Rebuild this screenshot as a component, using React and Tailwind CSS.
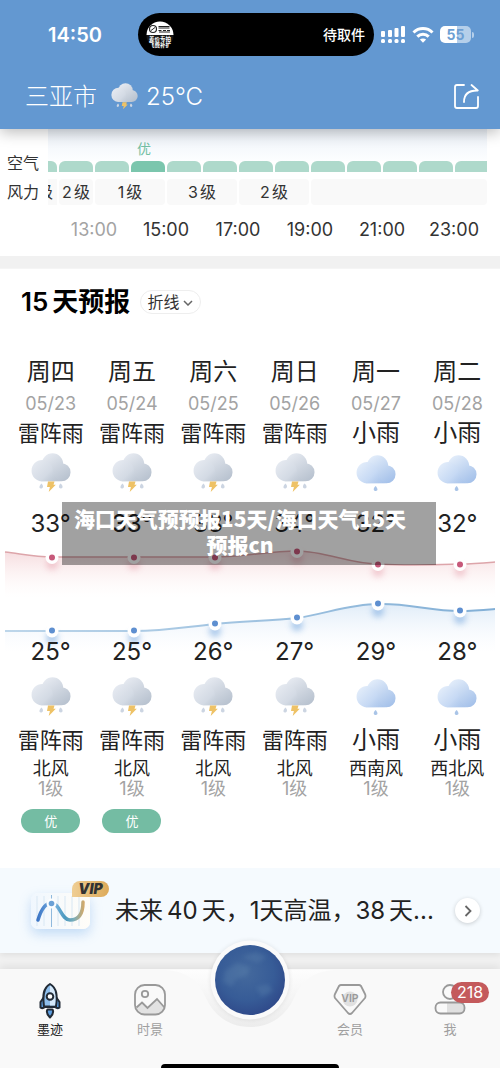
import React, { useId } from 'react';

const days = [
  { name: '周四', date: '05/23', sky: '雷阵雨', high: '33°', low: '25°', wind: '北风', air: '优' },
  { name: '周五', date: '05/24', sky: '雷阵雨', high: '33°', low: '25°', wind: '北风', air: '优' },
  { name: '周六', date: '05/25', sky: '雷阵雨', high: '33°', low: '26°', wind: '北风' },
  { name: '周日', date: '05/26', sky: '雷阵雨', high: '34°', low: '27°', wind: '北风' },
  { name: '周一', date: '05/27', sky: '小雨', high: '32°', low: '29°', wind: '西南风' },
  { name: '周二', date: '05/28', sky: '小雨', high: '32°', low: '28°', wind: '西北风' },
];

const hours = ['13:00', '15:00', '17:00', '19:00', '21:00', '23:00'];
const highPoints = [[52, 17], [134, 17], [215, 17], [297, 11], [378, 24], [460, 24]];
const lowPoints = [[52, 91], [134, 91], [215, 84], [297, 78], [378, 64], [460, 71]];

function CloudIcon({ storm, className }) {
  const id = useId();
  const [light, mid, dark] = storm ? ['#e6eaf1', '#d3dae4', '#b9c3d0'] : ['#e3edfa', '#c6d9f4', '#a6c2ea'];
  return (
    <svg viewBox="0 0 40 40" className={className} aria-hidden="true">
      <defs>
        <linearGradient id={id + 'a'} gradientUnits="userSpaceOnUse" x1="14" y1="2" x2="32" y2="28">
          <stop offset="0" stopColor={light} />
          <stop offset="1" stopColor={dark} />
        </linearGradient>
        <linearGradient id={id + 'b'} gradientUnits="userSpaceOnUse" x1="3" y1="9" x2="24" y2="30">
          <stop offset="0" stopColor={light} />
          <stop offset="0.6" stopColor={mid} />
          <stop offset="1" stopColor={dark} stopOpacity="0.300" />
        </linearGradient>
      </defs>
      <g transform={storm ? undefined : 'translate(0 2)'}>
        <path d="M10 28.300V18H22L30.500 10.200A9.050 9.050 0 0 1 30.500 28.300z" fill={`url(#${id}a)`} />
        <circle cx="21.500" cy="11" r="10.700" fill={`url(#${id}a)`} />
        <path d="M11.200 7a10.650 10.650 0 0 1 10.600 9.500c.4 4.500 2.600 8.300 7 11.800H11.200A10.650 10.650 0 0 1 11.200 7z" fill={`url(#${id}b)`} />
      </g>
      {storm ? (
        <>
          <path d="M17 28.500h6.500l-1 3.200h2.300L17.700 39l1.200-5h-2.900z" fill="#eec266" />
          <path d="M10.500 30.500c-2 1.500-3 5-.6 5s3-2.500.6-5zM29.500 30.500c-2.200 2-2 5 .4 5s2.200-3.500-.4-5z" fill="#ccd5e2" />
        </>
      ) : (
        <path d="M19.500 33c-2.500 2.500-2.300 5 .2 5s2.200-3-.2-5z" fill="#a9c4e7" />
      )}
    </svg>
  );
}

function TrendChart() {
  return (
    <svg viewBox="0 0 500 96" className="block h-auto w-full overflow-visible" role="img" aria-label="最高与最低气温折线">
      <defs>
        <linearGradient id="warm" x1="0" y1="0" x2="0" y2="1">
          <stop offset="0" stopColor="#f5dadd" stopOpacity="0.95" />
          <stop offset="1" stopColor="#fff6f5" stopOpacity="0" />
        </linearGradient>
        <linearGradient id="cool" x1="0" y1="0" x2="0" y2="1">
          <stop offset="0" stopColor="#e0ecf8" />
          <stop offset="1" stopColor="#f5f9fe" stopOpacity="0" />
        </linearGradient>
        <linearGradient id="coolLine">
          <stop offset="0" stopColor="#bdd6ea" />
          <stop offset="1" stopColor="#82afd6" />
        </linearGradient>
        <filter id="soft" x="-100%" y="-100%" width="300%" height="300%">
          <feGaussianBlur stdDeviation="3" />
        </filter>
      </defs>
      <path d="M5 12C22 14 35 17 52 17H215C245 17 268 11 297 11C325 11 350 24 378 24C410 26 430 25 460 24C474 24 484 23 495 22V58H5z" fill="url(#warm)" />
      <path d="M5 12C22 14 35 17 52 17H215C245 17 268 11 297 11C325 11 350 24 378 24C410 26 430 25 460 24C474 24 484 23 495 22" fill="none" stroke="#dda5aa" strokeWidth="1.500" />
      <path d="M5 91H134C165 91 185 87 215 84C243 81 270 81 297 78C325 74 350 64 378 64C408 63 430 71 460 71C474 71 484 70 495 69V112H5z" fill="url(#cool)" />
      <path d="M5 91H134C165 91 185 87 215 84C243 81 270 81 297 78C325 74 350 64 378 64C408 63 430 71 460 71C474 71 484 70 495 69" fill="none" stroke="url(#coolLine)" strokeWidth="2" />
      {highPoints.map(([x, y]) => (
        <g key={x}>
          <circle cx={x} cy={y + 7} r="6" fill="#e28b9b" opacity="0.400" filter="url(#soft)" />
          <circle cx={x} cy={y + 0.5} r="6.500" fill="#fff" />
          <circle cx={x} cy={y + 0.5} r="3" fill="#c7597a" />
        </g>
      ))}
      {lowPoints.map(([x, y]) => (
        <g key={x}>
          <circle cx={x} cy={y + 7} r="6" fill="#79a9df" opacity="0.600" filter="url(#soft)" />
          <circle cx={x} cy={y} r="6.500" fill="#fff" />
          <circle cx={x} cy={y - 0.5} r="3" fill="#5e8fd0" />
        </g>
      ))}
    </svg>
  );
}

function Header() {
  return (
    <header className="relative z-10 bg-[#6398d1] pt-[13px] text-white shadow-[0_3px_14px_rgba(0,0,0,0.28)]">
      <div className="flex h-[43px] items-center">
        <div className="w-[138px] pl-12 text-xl font-semibold">14:50</div>
        <div className="flex h-full flex-1 items-center justify-between rounded-full bg-black pr-[9px] pl-2">
          <svg viewBox="0 0 28 28" className="size-7" aria-hidden="true">
            <defs>
              <clipPath id="avatar"><circle cx="14" cy="14" r="13.500" /></clipPath>
            </defs>
            <g clipPath="url(#avatar)">
              <rect width="28" height="28" fill="#151515" />
              <rect width="28" height="14" fill="#fff" />
              <circle cx="7" cy="8" r="3.500" fill="none" stroke="#222" strokeWidth="1.200" />
              <path d="M5 9.500l4-3M12.500 5.500h11M12.500 7h11M12.500 9.500h3M17 9.500h3M21 9.500h3M13 11h11" stroke="#222" strokeWidth="1" fill="none" />
            </g>
            <g fill="#fff" fontSize="5.500" fontWeight="700">
              <text x="3" y="20">差价专拍</text>
              <text x="3" y="26">飞费补扩</text>
            </g>
          </svg>
          <span className="text-sm font-medium">待取件</span>
        </div>
        <div className="flex w-[126px] items-center pl-[7px]">
          <svg viewBox="0 0 24 17" className="h-[17px] w-6" fill="#fff" aria-label="信号">
            <rect x="0" y="5" width="4" height="6" rx="1" /><rect x="7" y="4" width="4" height="7" rx="1" />
            <rect x="13.500" y="2" width="4" height="9" rx="1" /><rect x="20" y="0" width="4" height="11" rx="1" />
            <rect x="0" y="13" width="4" height="4" rx="1.500" /><rect x="7" y="13" width="4" height="4" rx="1.500" />
            <rect x="13.500" y="13" width="4" height="4" rx="1.500" /><rect x="20" y="13" width="4" height="4" rx="1.500" />
          </svg>
          <svg viewBox="0 0 22 16" className="ml-[7px] h-4 w-[22px]" fill="none" stroke="#fff" strokeWidth="3" aria-label="无线网络">
            <path d="M1.500 5.500a13.500 13.500 0 0 1 19 0M5.300 9.600a8 8 0 0 1 11.400 0" />
            <path d="M11 11.500c1.300 0 2.300.4 3.100 1.100L11 15.800l-3.100-3.200c.8-.7 1.800-1.100 3.100-1.100z" fill="#fff" stroke="none" />
          </svg>
          <div className="ml-[6px] flex h-[17px] w-[31px] items-center justify-center rounded-[5px] bg-linear-to-r from-white from-55% to-[#b5cfea] to-55% text-sm font-bold text-[#6e9fd3]">55</div>
          <div className="ml-px h-1.5 w-0.5 rounded-r bg-[#b5cfea]" />
        </div>
      </div>
      <div className="flex h-[73px] items-center pt-2 pr-5 pl-[25px] text-2xl font-light">
        <span>三亚市</span>
        <CloudIcon storm className="ml-[14px] size-[27px]" />
        <span className="ml-2">25°C</span>
        <button className="ml-auto" aria-label="分享">
          <svg viewBox="0 0 27 27" className="size-[27px]" fill="none" stroke="#fff" strokeWidth="1.800">
            <path d="M11 2H4Q2 2 2 4V23Q2 25 4 25H23Q25 25 25 23V14" strokeLinecap="round" />
            <path d="M11 19C11 12 14 7.500 24 7.500M18.500 2L24.800 7.500" strokeLinecap="round" />
          </svg>
        </button>
      </div>
    </header>
  );
}

function HourlyStrip() {
  return (
    <section className="h-[127px] bg-white text-[#333]">
      <div className="flex">
        <div className="w-12 pt-[23px] pl-[7px] text-base leading-[22px]">
          <div>空气</div>
          <div className="mt-[7px]">风力</div>
        </div>
        <div className="mr-[13px] min-w-0 flex-1">
          <div className="grid h-8 grid-cols-[9fr_repeat(11,34fr)_32fr] gap-x-0.5 bg-linear-to-b from-[#edf2f9] to-[#fdfeff]">
            <div className="col-start-4 pt-[9px] pr-2 text-center text-sm leading-[22px] text-[#73bfa3]">优</div>
          </div>
          <div className="grid h-[11px] grid-cols-[9fr_repeat(11,34fr)_32fr] gap-x-0.5">
            {Array.from({ length: 13 }, (_, i) => (
              <div
                key={i}
                className={
                  i === 3 ? 'rounded-t-md bg-[#7bc6ad]' : i === 0 ? 'rounded-tr-md bg-[#aed9cb]' : i === 12 ? 'rounded-tl-md bg-[#aed9cb]' : 'rounded-t-md bg-[#aed9cb]'
                }
              />
            ))}
          </div>
          <div className="mt-[7px] grid h-[26px] grid-cols-[9fr_34fr_70fr_70fr_70fr_176fr] gap-x-0.5 text-base leading-[26px]">
            {['级', '2级', '1级', '3级', '2级', ''].map((label, i) => (
              <div key={i} className={'flex overflow-hidden bg-[#f9f9f9] ' + (i === 0 ? 'justify-end pr-1' : 'justify-center gap-0.5 rounded')}>
                {label.length > 1 ? <><span>{label[0]}</span><span>{label[1]}</span></> : label}
              </div>
            ))}
          </div>
        </div>
      </div>
      <div className="mt-[13px] mr-[10px] ml-[58px] grid grid-cols-6 text-center text-lg leading-6">
        {hours.map((h, i) => (
          <span key={h} className={i === 0 ? 'text-[#a3a3a3]' : ''}>{h}</span>
        ))}
      </div>
    </section>
  );
}

function Forecast() {
  return (
    <section className="relative mt-[13px] bg-white pb-[35px] text-[#222] shadow-[0_-1px_0_#f5f5f5]">
      <div className="flex h-[86px] items-start pt-[15px] pl-[21px]">
        <h2 className="flex items-center gap-1 text-[26px] leading-9 font-semibold text-black">
          <span>15</span><span>天预报</span>
        </h2>
        <div className="relative mt-[6px] ml-[10px]">
          <select aria-label="显示方式" className="block h-6 w-[61px] appearance-none rounded-full border border-[#eeeeee] bg-white pl-[6px] text-base leading-5 text-[#333]">
            <option>折线</option>
            <option>列表</option>
          </select>
          <svg viewBox="0 0 10 6" className="pointer-events-none absolute top-[10px] right-[8px] h-[6px] w-[10px]" fill="none" stroke="#666" strokeWidth="1.500">
            <path d="M1 1l4 4 4-4" />
          </svg>
        </div>
      </div>
      <div className="grid grid-cols-6 pr-[2px] pl-[10px] pt-px">
        {days.map((d) => (
          <div key={d.date} className="flex flex-col items-center whitespace-nowrap">
            <span className="text-2xl">{d.name}</span>
            <span className="mt-[5px] text-lg leading-[22px] text-[#a3a3a3]">{d.date}</span>
            <span className={'mt-[3px] leading-[30px] ' + (d.sky.length > 2 ? 'text-[22px]' : 'text-2xl leading-[30px]')}>{d.sky}</span>
            <CloudIcon storm={d.sky === '雷阵雨'} className="mt-[5px] size-10" />
            <span className="mt-[15px] text-2xl">{d.high}</span>
          </div>
        ))}
      </div>
      <TrendChart />
      <div className="relative grid grid-cols-6 pr-[2px] pl-[10px]">
        {days.map((d) => (
          <div key={d.date} className="flex flex-col items-center whitespace-nowrap">
            <span className="text-2xl">{d.low}</span>
            <CloudIcon storm={d.sky === '雷阵雨'} className="mt-[9px] size-10" />
            <span className={'mt-2 leading-[30px] ' + (d.sky.length > 2 ? 'text-[22px]' : 'text-2xl leading-[30px]')}>{d.sky}</span>
            <span className="mt-[3px] text-lg leading-[22px]">{d.wind}</span>
            <span className="text-lg leading-[18px] text-[#a3a3a3]">1级</span>
            {d.air && (
              <span className="mt-[11px] h-6 w-[59px] rounded-full bg-[#74bca3] text-center text-[13px] leading-6 text-white">{d.air}</span>
            )}
          </div>
        ))}
      </div>
      <div className="absolute top-[233px] right-16 left-[62px] h-[63px] bg-black/37 pt-[3px] pr-[18px] text-center font-['Noto_Sans_CJK_SC',sans-serif] text-[21px] leading-[26px] font-black text-white">
        海口天气预预报15天/海口天气15天<br />预报cn
      </div>
    </section>
  );
}

function VipBanner() {
  return (
    <section className="flex h-[85px] items-center bg-[#f5fafe] pr-5 pl-[31px] text-[#222] shadow-[0_2px_6px_rgba(0,0,0,0.08)]">
      <div className="relative">
        <svg viewBox="0 0 59 36" className="h-9 w-[59px] rounded-[7px] bg-linear-to-r from-[#f0f7fe] to-[#fffdf8] shadow-[0_5px_12px_rgba(120,175,235,0.4)]" aria-hidden="true">
          <defs>
            <linearGradient id="wave" gradientUnits="userSpaceOnUse" x1="6" y1="0" x2="53" y2="0"><stop offset="0" stopColor="#3972c4" /><stop offset="0.350" stopColor="#7cb5e3" /><stop offset="0.600" stopColor="#4a98be" /><stop offset="0.780" stopColor="#79aebb" /><stop offset="1" stopColor="#d4a968" /></linearGradient>
          </defs>
          <path d="M6 3v30M13 3v30M27 3v30M34 3v30M41 3v30M48 3v30" stroke="#d8e7f3" strokeWidth="1" />
          <path d="M20.500 2v32" stroke="#8fb9dd" strokeWidth="1" />
          <path d="M7 27C10 17 14 10 20.500 10C29 10 30 27 39 27C48 27 52 20 52 9" fill="none" stroke="url(#wave)" strokeWidth="3.500" strokeLinecap="round" />
          <circle cx="20.500" cy="10.500" r="5" fill="#fafdff" />
          <circle cx="20.500" cy="10.500" r="2.800" fill="#6ba1d6" />
        </svg>
        <span className="absolute -top-3 left-[41px] h-4 w-[37px] rounded-t-lg rounded-br-lg bg-linear-to-r from-[#efce94] to-[#ddaa59] text-center text-sm leading-4 font-black text-[#333] italic">VIP</span>
      </div>
      <div className="ml-[25px] flex min-w-0 flex-1 items-center text-2xl whitespace-nowrap">
        未来<span className="mx-1">40</span>天，1天高温，<span className="mr-1">38</span>天...
      </div>
      <button className="flex size-[25px] items-center justify-center rounded-full bg-white shadow-[0_1px_4px_rgba(0,0,0,0.18)]" aria-label="查看">
        <svg viewBox="0 0 8 12" className="h-3 w-2" fill="none" stroke="#666" strokeWidth="1.800"><path d="M1.500 1l5 5-5 5" /></svg>
      </button>
    </section>
  );
}

function Tab({ label, active, children }) {
  return (
    <a href="#" className={'flex flex-col items-center pt-[14px] text-[13px] leading-5 ' + (active ? 'text-[#222]' : 'text-[#a0a0a0]')}>
      {children}
      <span>{label}</span>
    </a>
  );
}

function TabBar() {
  return (
    <nav className="relative mt-4 h-[99px] bg-[#f9f9f9] shadow-[0_-3px_8px_rgba(0,0,0,0.07)]">
      <svg viewBox="0 0 170 96" className="absolute -top-[32px] left-1/2 h-24 w-[170px] -translate-x-1/2" aria-hidden="true">
        <defs>
          <linearGradient id="notch" x1="0" y1="0" x2="0" y2="1"><stop offset="0" stopColor="#fdfdfd" /><stop offset="1" stopColor="#ececec" /></linearGradient>
          <radialGradient id="ocean" cx="0.45" cy="0.4" r="0.65"><stop offset="0" stopColor="#44699d" /><stop offset="0.600" stopColor="#375c97" /><stop offset="1" stopColor="#2e4788" /></radialGradient>
          <filter id="haze"><feGaussianBlur stdDeviation="2" /></filter>
        </defs>
        <path d="M0 33C24 34 34 46 41 61C49 79 65 90 85 90C105 90 121 79 129 61C136 46 146 34 170 33z" fill="url(#notch)" />
        <circle cx="85" cy="43" r="40" fill="#000" opacity="0.070" filter="url(#haze)" />
        <circle cx="85" cy="43" r="39.500" fill="#fafafa" />
        <circle cx="85" cy="43" r="35" fill="url(#ocean)" />
        <g fill="#7198ba" opacity="0.220" filter="url(#haze)">
          <path d="M60 34l12-8 13 4-4 9-10 3-4 8-9-5zM91 50l12-3 5 7-11 6zM77 20l14-5 11 5-9 6z" />
        </g>
      </svg>
      <div className="grid grid-cols-5">
        <Tab label="墨迹" active>
          <svg viewBox="0 0 22 36" className="h-9 w-[22px]" fill="none" stroke="#222b36" strokeWidth="2" strokeLinejoin="round">
            <path d="M5 14L1.500 19V24.500Q3.500 26 6 24H16Q18.500 26 20.500 24.500V19L17 14z" fill="#5d9ee0" />
            <path d="M11 1C4 5 3.500 13 5 23.500H17C18.500 13 18 5 11 1z" fill="#8fbfec" />
            <path d="M11 2.500C17 6 17 13 16 22.500H11z" fill="#d6e9fa" stroke="none" />
            <circle cx="11" cy="13.500" r="3.300" fill="#fff" />
            <path d="M8.500 26.500H13.500Q15.500 30 11 34.500Q6.500 30 8.500 26.500z" fill="#5d9ee0" />
          </svg>
        </Tab>
        <Tab label="时景">
          <svg viewBox="0 0 32 36" className="h-9 w-8" fill="none" stroke="#999" strokeWidth="1.800">
            <path d="M2 24l7-5 5 5 9-8 7 8v2q-1 6-8 6H10q-7 0-8-8z" fill="#e2e2e2" stroke="none" />
            <rect x="1" y="2" width="30" height="29.500" rx="9.500" />
            <circle cx="11" cy="11" r="3.200" />
            <path d="M2.500 24.500L8 19.500L13.500 25L23 16L30.500 24.500" />
          </svg>
        </Tab>
        <div className="relative flex justify-center">
          <button className="absolute -top-6 size-[70px] rounded-full" aria-label="地球" />
        </div>
        <Tab label="会员">
          <svg viewBox="0 0 34 36" className="h-9 w-[34px]" fill="none" stroke="#999" strokeWidth="1.800" strokeLinejoin="round">
            <circle cx="17" cy="16" r="7.500" fill="#e0e0e0" stroke="none" />
            <path d="M8 2H26Q27 2 28 3L32 11Q33 13 32 15L19 30Q17 32 15 30L2 15Q1 13 2 11L6 3Q7 2 8 2z" />
            <text x="17" y="19" textAnchor="middle" fontSize="10.500" fontWeight="600" fill="#999" stroke="none">VIP</text>
          </svg>
        </Tab>
        <div className="relative">
          <Tab label="我">
            <svg viewBox="0 0 32 36" className="h-9 w-8" fill="none" stroke="#999" strokeWidth="1.800">
              <path d="M13 20h13q4 0 4 5t-4 5H13z" fill="#e0e0e0" stroke="none" />
              <circle cx="16" cy="9" r="7" />
              <rect x="1.500" y="19.500" width="29" height="11" rx="5" />
            </svg>
          </Tab>
          <span className="absolute top-[13px] left-[51px] h-[21px] w-[38px] rounded-full bg-[#c45a5c] text-center text-base leading-[21px] text-white">218</span>
        </div>
      </div>
      <div className="absolute bottom-0 left-1/2 h-1 w-[178px] -translate-x-1/2 rounded-t bg-black" />
    </nav>
  );
}

export default function App() {
  return (
    <div className="bg-[#f1f1f1] font-['Inter','Noto_Sans_CJK_SC',sans-serif]">
      <Header />
      <main>
        <HourlyStrip />
        <Forecast />
        <VipBanner />
      </main>
      <TabBar />
    </div>
  );
}
